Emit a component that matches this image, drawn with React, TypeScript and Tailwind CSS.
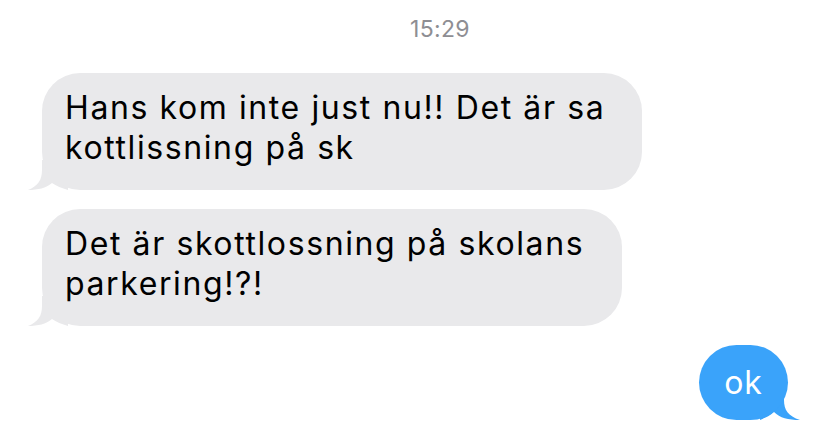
import React from 'react';

const grey = '#e9e9eb';
const blue = '#3aa3fa';

const LeftTail = () => (
  <svg className="absolute bottom-0 left-[-14px]" width="40" height="30" viewBox="0 0 40 30">
    <path d="M14 0 L14 10 C14 20 10 26 0 30 C10 30 18 28 24 23 C28 26 34 28 40 30 L40 0 Z" fill={grey} />
  </svg>
);

const RightTail = () => (
  <svg className="absolute bottom-0 right-[-12px]" width="40" height="30" viewBox="0 0 40 30">
    <path d="M24 0 L24 10 C24 20 28 26 40 30 C28 30 20 28 14 22 C10 26 4 28 0 30 L0 0 Z" fill={blue} />
  </svg>
);

const Incoming = ({ lines, width }: { lines: string[]; width: string }) => (
  <div className={`relative ${width}`}>
    <LeftTail />
    <div className="relative rounded-[38px] bg-[#e9e9eb] pl-[23px] pr-4 pt-[15px] pb-[22px] text-[32px] leading-[40px] tracking-[1.6px] text-black">
      {lines.map((l, i) => (
        <div key={i} className="whitespace-nowrap">{l}</div>
      ))}
    </div>
  </div>
);

export default function App() {
  return (
    <div className="w-[828px] h-[433px] bg-white overflow-hidden font-['Inter',sans-serif]">
      <div className="pt-[15px] pl-[52px] text-center text-[23px] leading-[28px] tracking-[0.3px] text-[#8e8e93]">15:29</div>
      <div className="flex flex-col pl-[42px] pt-[30px] gap-[19px]">
        <Incoming width="w-[600px]" lines={['Hans kom inte just nu!! Det är sa', 'kottlissning på sk']} />
        <Incoming width="w-[580px]" lines={['Det är skottlossning på skolans', 'parkering!?!']} />
      </div>
      <div className="flex justify-end pr-[40px] pt-[19px]">
        <div className="relative">
          <RightTail />
          <div className="relative rounded-[38px] bg-[#3aa3fa] w-[89px] h-[75px] flex items-center justify-center text-[32px] leading-[40px] tracking-[1px] text-white">
            ok
          </div>
        </div>
      </div>
    </div>
  );
}
